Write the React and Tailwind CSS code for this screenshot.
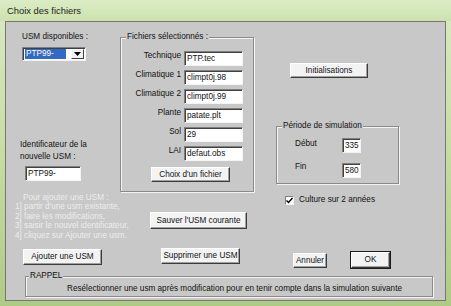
import React from "react";

const Btn = ({ className, children }) => (
  <div
    className={
      "flex items-center justify-center bg-[#f3f3f3] border border-t-white border-l-white border-b-[#3c3c3c] border-r-[#3c3c3c] shadow-[inset_-1px_-1px_0_#a0a0a0] text-[#111] whitespace-nowrap " +
      className
    }
  >
    {children}
  </div>
);

const Box = ({ className, children }) => (
  <div
    className={
      "flex items-center bg-white border border-t-[#808080] border-l-[#808080] border-b-[#f4f4f4] border-r-[#f4f4f4] shadow-[inset_1px_1px_0_#404040] pl-[2px] text-[#111] whitespace-nowrap " +
      className
    }
  >
    {children}
  </div>
);

const Row = ({ label, value }) => (
  <div className="flex items-start h-[15px]">
    <div className="w-[52px] ml-[8px] text-right">{label}</div>
    <Box className="w-[59px] h-[15px] ml-[3px]">{value}</Box>
  </div>
);

export default function App() {
  return (
    <div className="w-[451px] h-[306px] flex flex-col bg-gradient-to-b from-[#d9eac2] via-[#c6dda2] to-[#aecb84] font-['Liberation_Sans',Arial,sans-serif] text-[8.2px] leading-[10px] text-[#111] overflow-hidden">
      {/* title bar */}
      <div className="h-[21px] flex items-center pl-[7px] text-[9.4px] text-[#1c1c1c] bg-gradient-to-b from-[#dcecc7] to-[#cce2ad] shrink-0">
        Choix des fichiers
      </div>

      {/* client area */}
      <div className="ml-[5px] mr-[5px] h-[280px] bg-[#c8c8c8] border border-[#767676] flex flex-col shrink-0">
        <div className="flex items-start h-[226px]">
          {/* left column */}
          <div className="w-[114px] flex flex-col items-start">
            <div className="mt-[10px] ml-[16px] whitespace-nowrap">USM disponibles :</div>
            <div className="mt-[5px] ml-[16px] w-[64px] h-[14px] flex items-stretch bg-white border border-t-[#808080] border-l-[#808080] border-b-[#f4f4f4] border-r-[#f4f4f4] shadow-[inset_1px_1px_0_#404040]">
              <div className="ml-[2px] my-[1px] pl-[1px] w-[41px] flex items-center bg-[#3169c6] text-white">
                PTP99-
              </div>
              <div className="ml-auto w-[13px] my-[1px] mr-[1px] flex items-center justify-center bg-[#f0f0f0] border border-t-white border-l-white border-b-[#404040] border-r-[#404040]">
                <svg width="7" height="4" viewBox="0 0 7 4">
                  <path d="M0 0h7L3.5 4z" fill="#000" />
                </svg>
              </div>
            </div>
            <div className="mt-[78px] ml-[14px] leading-[12px] whitespace-nowrap">
              Identificateur de la
              <br />
              nouvelle USM :
            </div>
            <Box className="mt-[3px] ml-[19px] w-[56px] h-[15px]">PTP99-</Box>
            <div className="mt-[12px] ml-[9px] leading-[9.4px] text-[#ededed] whitespace-nowrap">
              <div className="pl-[8px]">Pour ajouter une USM :</div>
              <div>1] partir d'une usm existante,</div>
              <div>2] faire les modifications,</div>
              <div>3] saisir le nouvel identificateur,</div>
              <div>4] cliquez sur Ajouter une usm.</div>
            </div>
          </div>

          {/* middle column */}
          <div className="w-[134px] flex flex-col items-start">
            <fieldset className="mt-[10px] w-[134px] h-[160px] border border-[#8a8a8a] shadow-[1px_1px_0_#f4f4f4,inset_1px_1px_0_#f4f4f4]">
              <legend className="ml-[5px] px-[1px] bg-[#c8c8c8] leading-[10px]">
                Fichiers sélectionnés :
              </legend>
              <div className="flex flex-col gap-[4px] pt-[9px]">
                <Row label="Technique" value="PTP.tec" />
                <Row label="Climatique 1" value="climpt0j.98" />
                <Row label="Climatique 2" value="climpt0j.99" />
                <Row label="Plante" value="patate.plt" />
                <Row label="Sol" value="29" />
                <Row label="LAI" value="defaut.obs" />
              </div>
              <Btn className="mt-[6px] ml-[30px] w-[79px] h-[15px]">Choix d'un fichier</Btn>
            </fieldset>
            <Btn className="mt-[20px] ml-[30px] w-[97px] h-[17px]">Sauver l'USM courante</Btn>
          </div>

          {/* right column */}
          <div className="flex-1 flex flex-col items-start">
            <Btn className="mt-[41px] ml-[36px] w-[78px] h-[15px]">Initialisations</Btn>
            <fieldset className="mt-[43px] ml-[22px] w-[123px] h-[63px] border border-[#8a8a8a] shadow-[1px_1px_0_#f4f4f4,inset_1px_1px_0_#f4f4f4]">
              <legend className="ml-[5px] px-[1px] bg-[#c8c8c8] leading-[10px]">
                Période de simulation
              </legend>
              <div className="flex flex-col gap-[10px] pt-[7px]">
                <div className="flex items-start">
                  <div className="w-[47px] ml-[18px] mt-[1px]">Début</div>
                  <Box className="w-[19px] h-[15px]">335</Box>
                </div>
                <div className="flex items-start">
                  <div className="w-[47px] ml-[18px] -mt-[1px]">Fin</div>
                  <Box className="w-[19px] h-[15px]">580</Box>
                </div>
              </div>
            </fieldset>
            <div className="mt-[11px] ml-[31px] flex items-center">
              <div className="w-[9px] h-[9px] bg-white border border-t-[#808080] border-l-[#808080] border-b-[#f4f4f4] border-r-[#f4f4f4] flex items-center justify-center">
                <svg width="7" height="7" viewBox="0 0 7 7">
                  <path d="M0.5 3.5L2.5 5.5L6.5 1" stroke="#000" strokeWidth="1.5" fill="none" />
                </svg>
              </div>
              <div className="ml-[5px] whitespace-nowrap">Culture sur 2 années</div>
            </div>
          </div>
        </div>

        {/* buttons row */}
        <div className="flex items-start h-[23px]">
          <Btn className="mt-[1px] ml-[17px] w-[79px] h-[16px]">Ajouter une USM</Btn>
          <Btn className="ml-[59px] w-[79px] h-[16px]">Supprimer une USM</Btn>
          <Btn className="mt-[5px] ml-[53px] w-[34px] h-[15px]">Annuler</Btn>
          <Btn className="mt-[4px] ml-[24px] w-[39px] h-[16px] outline outline-1 outline-[#1a1a1a]">OK</Btn>
        </div>

        {/* rappel */}
        <fieldset className="ml-[19px] w-[408px] h-[26px] border border-[#8a8a8a] shadow-[1px_1px_0_#f4f4f4,inset_1px_1px_0_#f4f4f4]">
          <legend className="ml-[3px] px-[1px] bg-[#c8c8c8] leading-[10px]">RAPPEL</legend>
          <div className="pl-[41px] pt-[3px] whitespace-nowrap">
            Resélectionner une usm après modification pour en tenir compte dans la simulation suivante
          </div>
        </fieldset>
      </div>
    </div>
  );
}
